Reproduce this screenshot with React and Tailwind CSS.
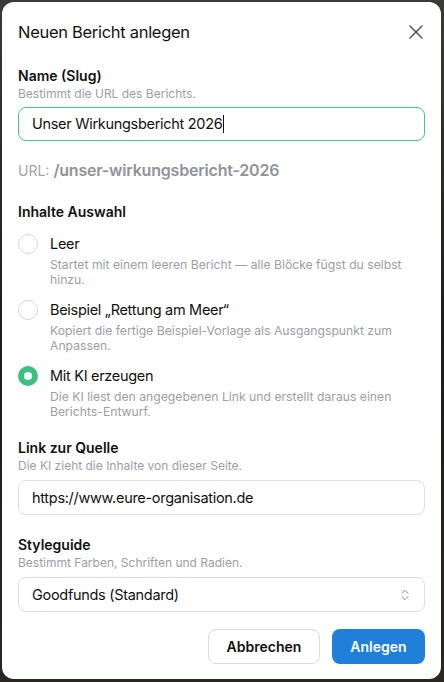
import { X, ChevronsUpDown } from 'lucide-react';

function Radio({ checked, title, text }) {
  return (
    <div className="flex gap-3">
      <div className="pt-[1px]">
        {checked ? (
          <div className="w-5 h-5 rounded-full bg-[#3dbf80] flex items-center justify-center">
            <div className="w-2 h-2 rounded-full bg-white" />
          </div>
        ) : (
          <div className="w-5 h-5 rounded-full border border-[#d4d7dd] bg-white" />
        )}
      </div>
      <div className="flex-1">
        <div className="text-[14.5px] leading-[22px] tracking-[-0.3px] text-[#111]">{title}</div>
        <div className="text-[12.2px] leading-[15px] text-[#9a9ea6] mt-[2px]">{text}</div>
      </div>
    </div>
  );
}

function Label({ title, hint }) {
  return (
    <div>
      <div className="text-[14px] leading-[20px] font-semibold text-[#111]">{title}</div>
      <div className="text-[12px] leading-[16px] text-[#9a9ea6]">{hint}</div>
    </div>
  );
}

export default function App() {
  return (
    <div
      className="w-[444px] h-[682px] bg-gradient-to-b from-[#3a3a36] via-[#1c1c1c] to-[#2b2622] pt-[2px] pl-[2px] pr-[3px] pb-[3px] flex"
      style={{ fontFamily: 'Inter, "Noto Sans", sans-serif' }}
    >
      <div className="flex-1 bg-white rounded-[12px] px-4 pt-[18px] flex flex-col">
        <div className="flex items-center justify-between h-6">
          <h1 className="text-[16.5px] tracking-[-0.3px] text-[#111]">Neuen Bericht anlegen</h1>
          <X className="w-6 h-6 text-[#555] -mr-[3px]" strokeWidth={1.5} />
        </div>

        <div className="mt-[22px]">
          <Label title="Name (Slug)" hint="Bestimmt die URL des Berichts." />
          <div className="mt-[5px] h-[34px] rounded-[8px] border border-[#4cc48c] flex items-center px-[13px] text-[14.5px] tracking-[-0.3px] text-[#111]">
            Unser Wirkungsbericht 2026<span className="w-[1px] h-[18px] bg-[#111] ml-[1px]" />
          </div>
          <div className="mt-[17px] flex items-baseline gap-[4px] text-[#a0a4ab]">
            <span className="text-[14px]">URL:</span>
            <span className="text-[16px] tracking-[-0.2px] font-semibold text-[#8f939a]">/unser-wirkungsbericht-2026</span>
          </div>
        </div>

        <div className="mt-[20px] text-[14px] leading-[20px] font-semibold text-[#111]">Inhalte Auswahl</div>
        <div className="mt-[11px] flex flex-col gap-[12px]">
          <Radio title="Leer" text="Startet mit einem leeren Bericht — alle Blöcke fügst du selbst hinzu." />
          <Radio title="Beispiel „Rettung am Meer“" text="Kopiert die fertige Beispiel-Vorlage als Ausgangspunkt zum Anpassen." />
          <Radio checked title="Mit KI erzeugen" text="Die KI liest den angegebenen Link und erstellt daraus einen Berichts-Entwurf." />
        </div>

        <div className="mt-[19px]">
          <Label title="Link zur Quelle" hint="Die KI zieht die Inhalte von dieser Seite." />
          <div className="mt-[6px] h-[35px] rounded-[8px] border border-[#dcdfe4] flex items-center px-[13px] text-[14.5px] tracking-[-0.3px] text-[#111]">
            https://www.eure-organisation.de
          </div>
        </div>

        <div className="mt-[20px]">
          <Label title="Styleguide" hint="Bestimmt Farben, Schriften und Radien." />
          <div className="mt-[6px] h-[35px] rounded-[8px] border border-[#dcdfe4] flex items-center justify-between px-[13px] text-[14.5px] tracking-[-0.3px] text-[#111]">
            Goodfunds (Standard)
            <ChevronsUpDown className="w-[14px] h-[14px] text-[#777] -mr-[1px]" strokeWidth={1.5} />
          </div>
        </div>

        <div className="mt-[17px] flex justify-end gap-[12px]">
          <button className="h-[35px] w-[112px] rounded-[8px] border border-[#d8dbe0] bg-white text-[14px] font-semibold text-[#111]">
            Abbrechen
          </button>
          <button className="h-[35px] w-[93px] rounded-[8px] bg-[#1f7fd9] text-[14px] font-semibold text-white">
            Anlegen
          </button>
        </div>
      </div>
    </div>
  );
}
